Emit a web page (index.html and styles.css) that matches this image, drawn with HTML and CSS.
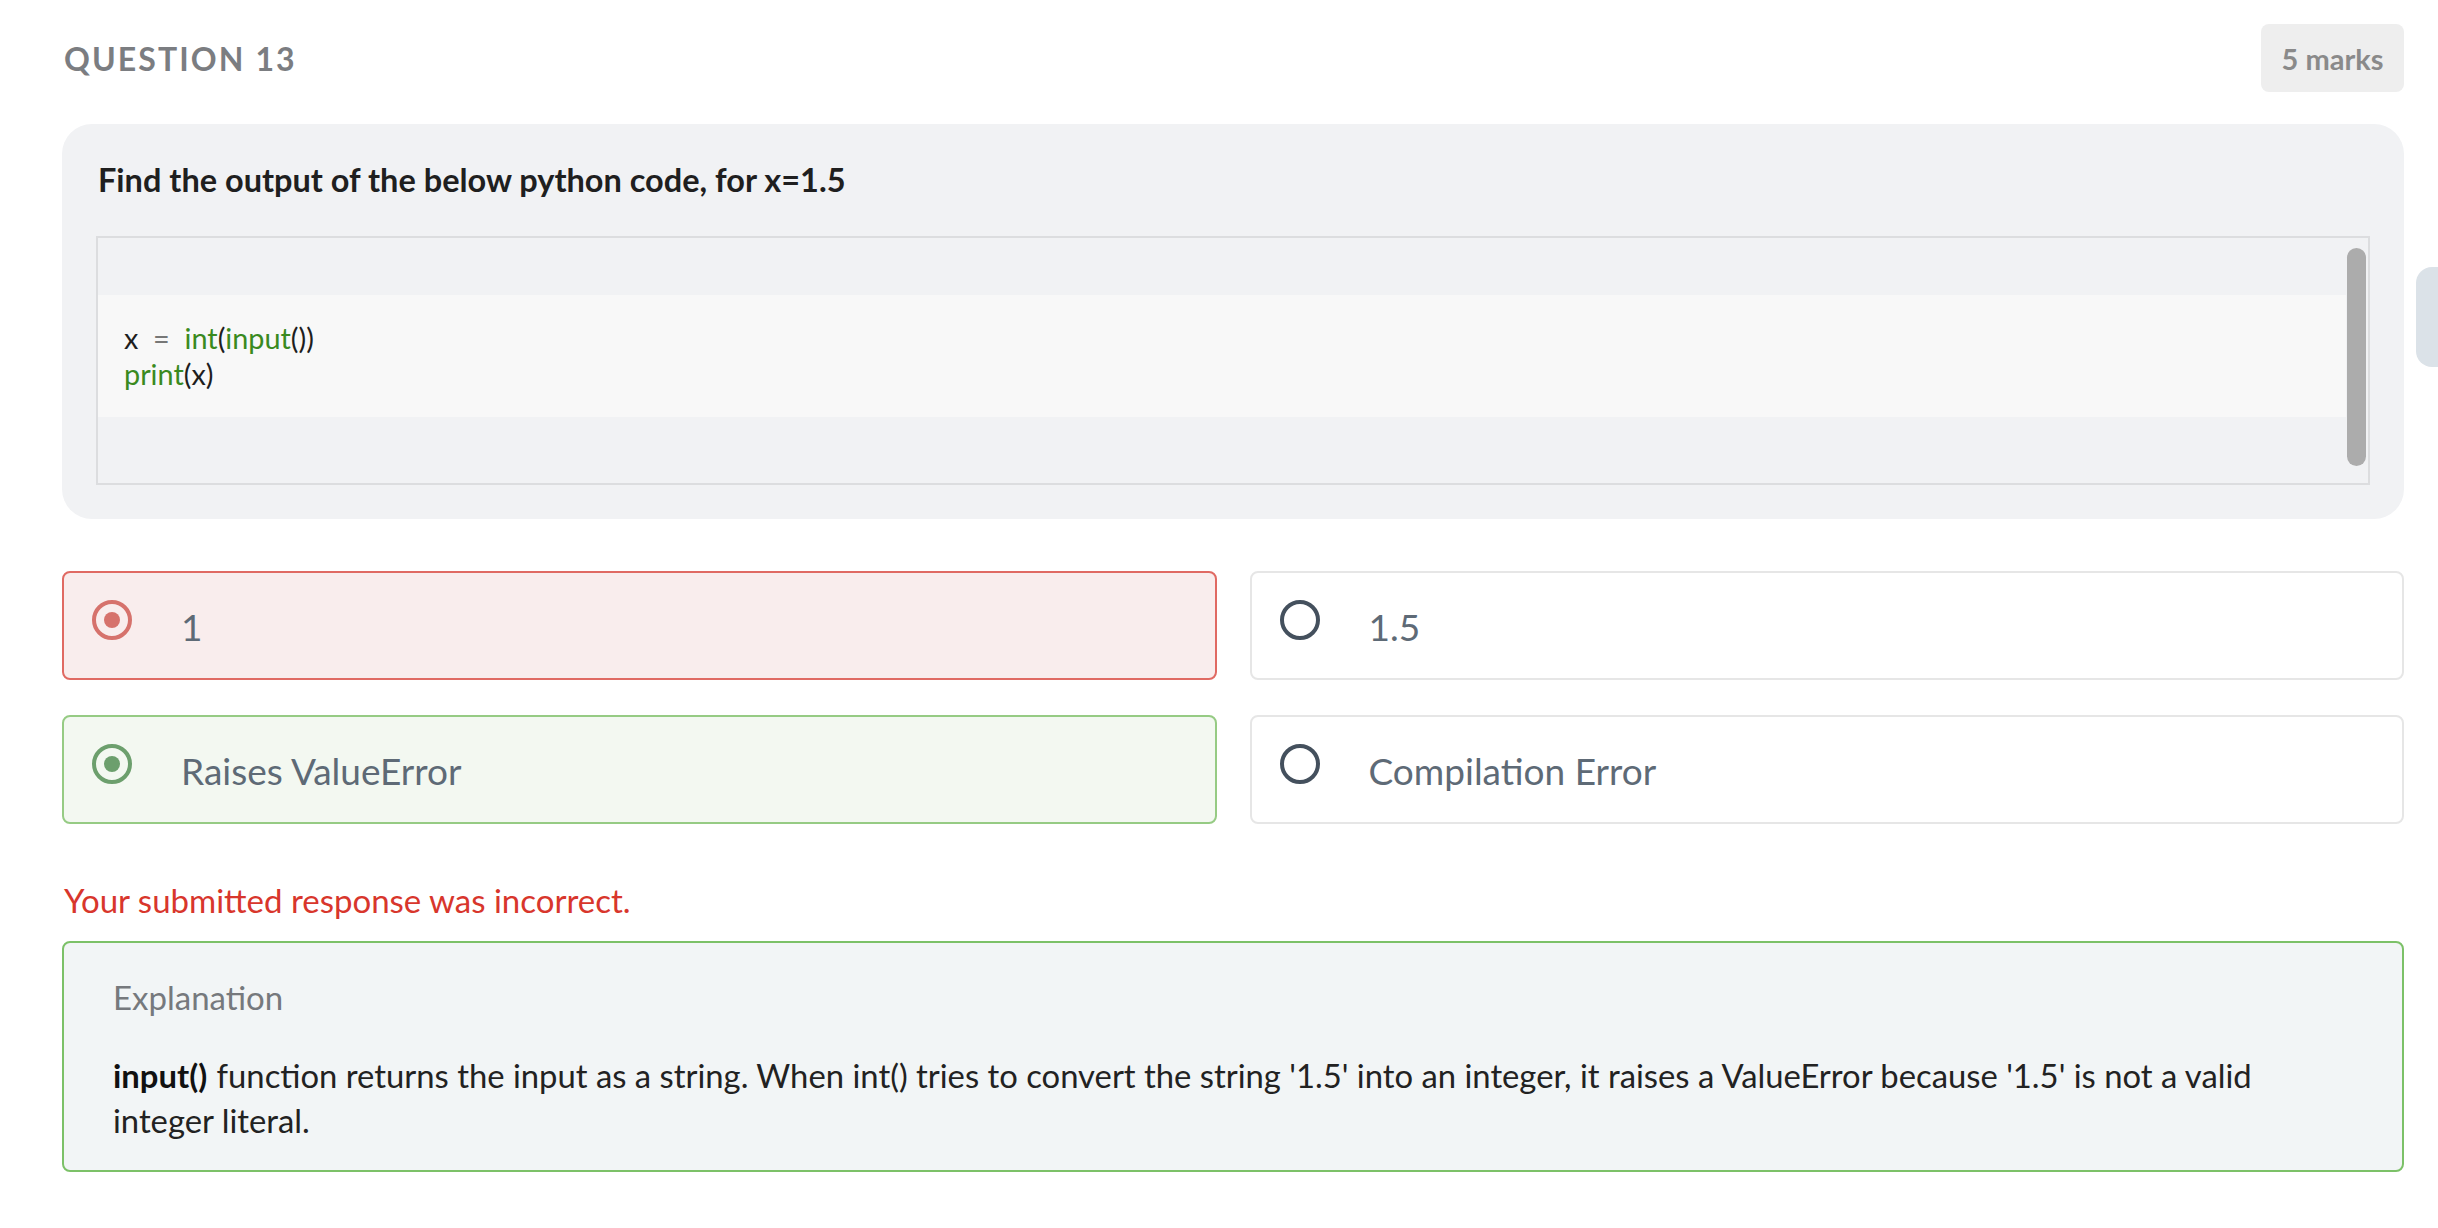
FILE: index.html
```html
<!DOCTYPE html>
<html lang="en">
<head>
<meta charset="utf-8">
<title>Question 13</title>
<link rel="stylesheet" href="styles.css">
</head>
<body>
<div class="page">
  <div class="header">
    <div class="qnum">QUESTION 13</div>
    <div class="marks">5 marks</div>
  </div>

  <div class="qcard">
    <div class="qtitle">Find the output of the below python code, for x=1.5</div>
    <div class="codebox">
      <div class="code-main">
        <div class="code-pad"></div>
        <div class="code-band">
          <div class="code-line">x  <span class="op">=</span>  <span class="fn">int</span>(<span class="fn">input</span>())</div>
          <div class="code-line"><span class="fn">print</span>(x)</div>
        </div>
        <div class="code-pad bottom"></div>
      </div>
      <div class="scroll"><div class="thumb"></div></div>
    </div>
  </div>

  <div class="options">
    <div class="opt wrong">
      <span class="radio checked"></span>
      <span class="opt-text">1</span>
    </div>
    <div class="opt">
      <span class="radio"></span>
      <span class="opt-text">1.5</span>
    </div>
    <div class="opt right">
      <span class="radio checked"></span>
      <span class="opt-text">Raises ValueError</span>
    </div>
    <div class="opt">
      <span class="radio"></span>
      <span class="opt-text">Compilation Error</span>
    </div>
  </div>

  <div class="result">Your submitted response was incorrect.</div>

  <div class="explain">
    <div class="explain-title">Explanation</div>
    <p class="explain-body"><b>input()</b> function returns the input as a string. When int() tries to convert the string '1.5' into an integer, it raises a ValueError because '1.5' is not a valid integer literal.</p>
  </div>
</div>
<div class="side-tab"></div>
</body>
</html>
```

FILE: styles.css
```css
* { box-sizing: border-box; }
html, body { margin: 0; padding: 0; background: #ffffff; }
body {
  font-family: Lato, "Open Sans", sans-serif;
  color: #222;
  position: relative;
  min-height: 1228px;
  overflow: hidden;
}
.page {
  padding: 24px 34px 0 62px;
}
.header {
  display: flex;
  justify-content: space-between;
  align-items: center;
  height: 68px;
}
.qnum {
  font-size: 32px;
  font-weight: 700;
  letter-spacing: 2.1px;
  color: #7b7d81;
  padding-left: 2px;
}
.marks {
  width: 143px;
  height: 68px;
  background: #eeeeee;
  border-radius: 8px;
  color: #8a8a8a;
  font-weight: 700;
  font-size: 29px;
  display: flex;
  align-items: center;
  justify-content: center;
}
.qcard {
  margin-top: 32px;
  background: #f1f2f4;
  border-radius: 30px;
  padding: 36px 34px 34px 34px;
}
.qtitle {
  font-size: 32.5px;
  font-weight: 700;
  color: #1f1f1f;
  line-height: 40px;
  padding-left: 2px;
  margin-bottom: 36px;
}
.codebox {
  border: 2px solid #dcdddf;
  height: 249px;
  display: flex;
  background: #f1f2f4;
}
.code-main {
  flex: 1;
  display: flex;
  flex-direction: column;
}
.code-pad { height: 57px; }
.code-band {
  background: #f8f8f8;
  height: 122px;
  padding: 25px 26px;
}
.code-line {
  font-size: 28.8px;
  line-height: 36px;
  color: #1e1e1e;
  white-space: pre;
}
.code-line .fn { color: #3a8a1f; }
.code-line .op { color: #777; }
.scroll {
  width: 22px;
  padding: 10px 2px 17px 1px;
  display: flex;
}
.thumb {
  flex: 1;
  background: #acacac;
  border-radius: 10px;
}
.options {
  margin-top: 52px;
  display: grid;
  grid-template-columns: 1fr 1fr;
  column-gap: 33px;
  row-gap: 35px;
}
.opt {
  height: 109px;
  border: 2px solid #e6e6e6;
  border-radius: 8px;
  background: #fff;
  display: flex;
  align-items: flex-start;
  padding: 27px 0 0 28px;
}
.opt.wrong { background: #f9eded; border-color: #e06a63; }
.opt.right { background: #f3f8f1; border-color: #96cb84; }
.radio {
  width: 40px;
  height: 40px;
  border-radius: 50%;
  border: 4px solid #44505d;
  flex: none;
  display: flex;
  align-items: center;
  justify-content: center;
}
.radio.checked::after {
  content: "";
  width: 16px;
  height: 16px;
  border-radius: 50%;
  background: currentColor;
}
.opt.wrong .radio { border-color: #d6726c; color: #d6726c; }
.opt.right .radio { border-color: #6c9f6d; color: #6c9f6d; }
.opt-text {
  margin-left: 49px;
  margin-top: 7px;
  font-size: 37px;
  line-height: 40px;
  color: #5e6a76;
}
.result {
  margin-top: 56px;
  font-size: 33px;
  line-height: 40px;
  color: #d8362c;
  padding-left: 2px;
}
.explain {
  margin-top: 21px;
  border: 2px solid #7cc168;
  border-radius: 8px;
  background: #f2f5f6;
  padding: 32px 130px 26px 49px;
  min-height: 231px;
}
.explain-title {
  font-size: 33px;
  line-height: 44px;
  color: #76797d;
  margin-bottom: 34px;
}
.explain-body {
  margin: 0;
  font-size: 32.8px;
  line-height: 45px;
  color: #222;
}
.explain-body b { color: #111; margin-right: 1px; }
.side-tab {
  position: absolute;
  right: 0;
  top: 267px;
  width: 22px;
  height: 100px;
  background: #dbe2e8;
  border-radius: 16px 0 0 16px;
}
```
